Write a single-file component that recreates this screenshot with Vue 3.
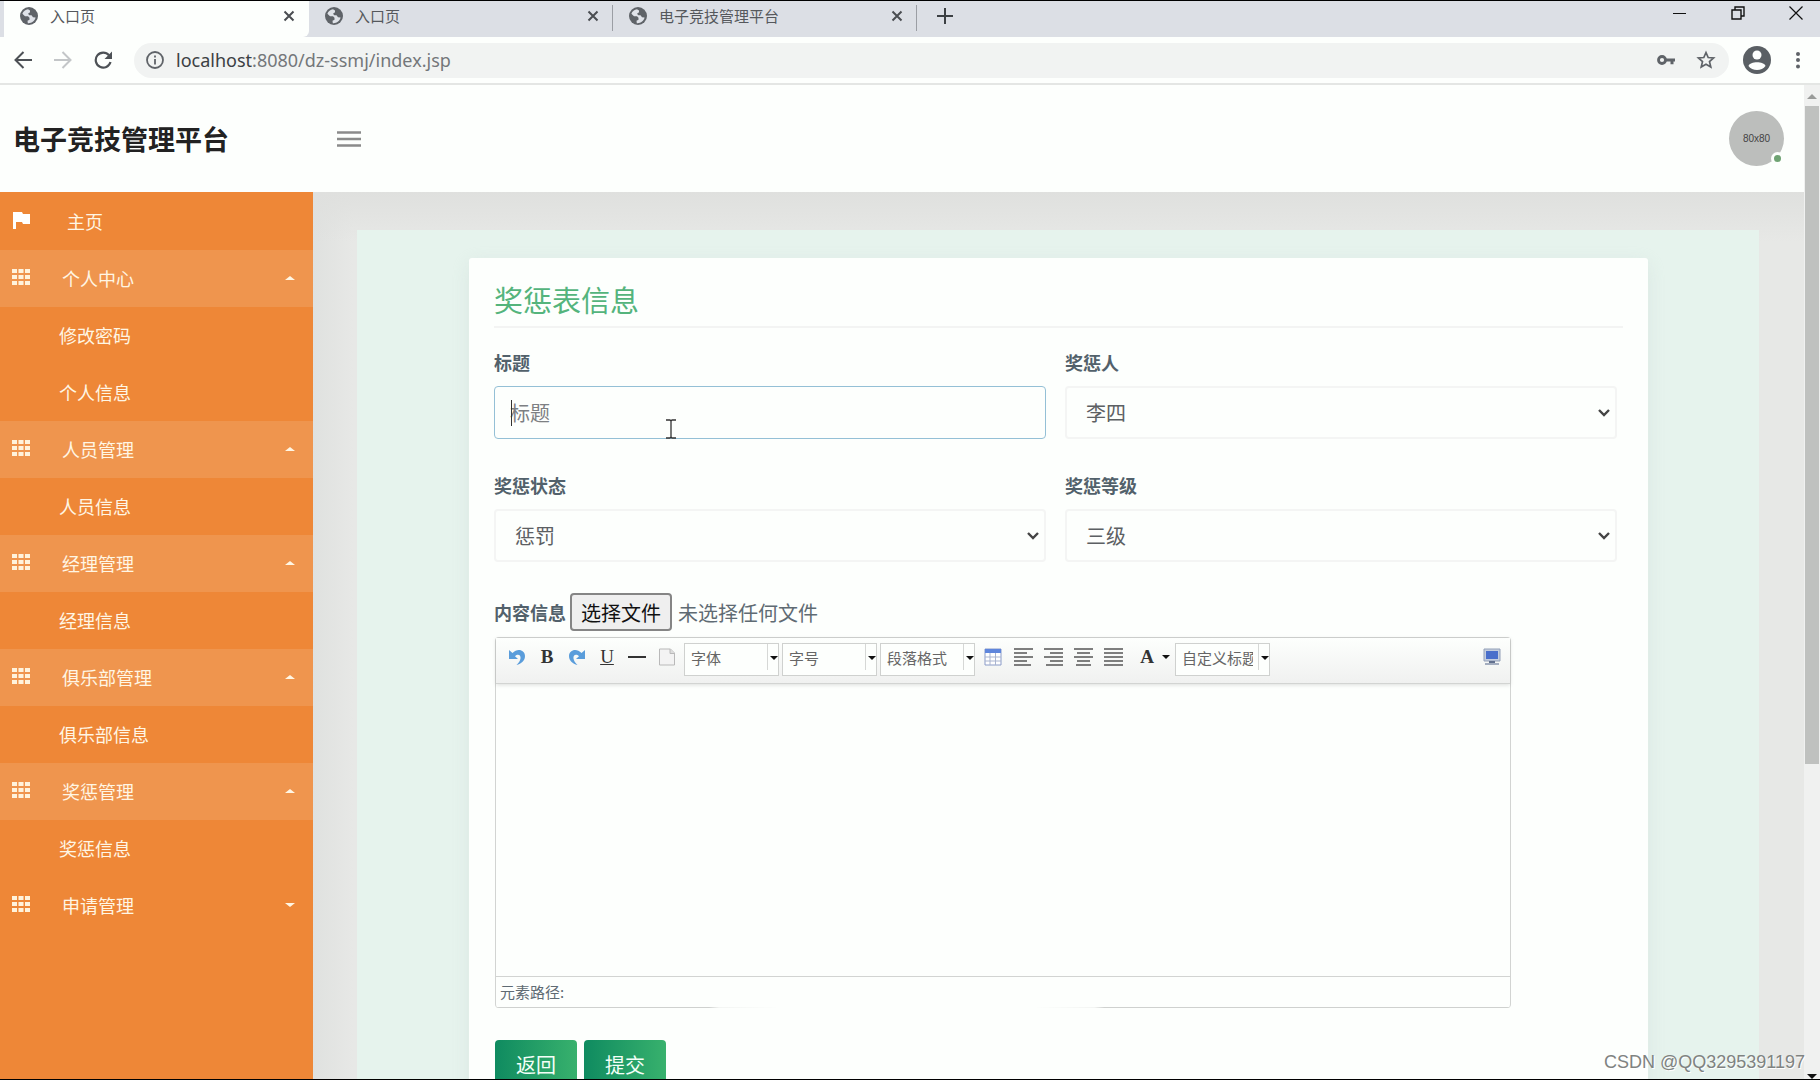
<script setup>
import { ref } from 'vue'

const tabs = [
  { title: '入口页', active: true },
  { title: '入口页', active: false },
  { title: '电子竞技管理平台', active: false },
]

const menu = [
  { title: '个人中心', open: true, items: ['修改密码', '个人信息'] },
  { title: '人员管理', open: true, items: ['人员信息'] },
  { title: '经理管理', open: true, items: ['经理信息'] },
  { title: '俱乐部管理', open: true, items: ['俱乐部信息'] },
  { title: '奖惩管理', open: true, items: ['奖惩信息'] },
  { title: '申请管理', open: false, items: [] },
]

const aligns = [
  { name: '左对齐', d: 'M0 1h19M0 5h13M0 9h19M0 13h13M0 17h17' },
  { name: '右对齐', d: 'M0 1h19M6 5h13M0 9h19M6 13h13M2 17h17' },
  { name: '居中', d: 'M0 1h19M3 5h13M0 9h19M3 13h13M2 17h15' },
  { name: '两端对齐', d: 'M0 1h19M0 5h19M0 9h19M0 13h19M0 17h19' },
]

const title = ref('')
const fileInput = ref(null)
const pickFile = () => fileInput.value.click()
</script>

<template>
  <div class="browser">
    <div class="tabstrip">
      <div v-for="(tab, i) in tabs" :key="i" class="tab" :class="{ active: tab.active }">
        <svg class="globe" viewBox="0 0 18 18" width="18" height="18">
          <circle cx="9" cy="9" r="9" fill="#5f6368" />
          <path d="M8 2.2C5.500 2.500 3.200 4.300 2.400 6.800L5 9.200h3l1.500 1.500v2l-2 1 .3 2.500c3.700.4 7-2 7.800-5.600l-2.600-.4-1.500-2H9.300L8 6.700l2-1.500V3.500z" fill="#dfe2e8" />
        </svg>
        <span class="tab-title">{{ tab.title }}</span>
        <button class="plain" aria-label="关闭标签页">
          <svg viewBox="0 0 12 12" width="12" height="12"><path d="M1.500 1.500l9 9M10.500 1.500l-9 9" stroke="#4a4d51" stroke-width="2" /></svg>
        </button>
      </div>
      <button class="plain new-tab" aria-label="新标签页">
        <svg viewBox="0 0 16 16" width="16" height="16"><path d="M8 0v16M0 8h16" stroke="#3c4043" stroke-width="2" /></svg>
      </button>
      <div class="window-buttons">
        <button class="plain" aria-label="最小化"><svg viewBox="0 0 14 14" width="14" height="14"><path d="M0 7.500h13" stroke="#111" /></svg></button>
        <button class="plain" aria-label="还原"><svg viewBox="0 0 14 14" width="14" height="14" fill="none" stroke="#111" stroke-width="1.400"><path d="M1 4h9v9H1zM4 4V1h9v9h-3" /></svg></button>
        <button class="plain" aria-label="关闭"><svg viewBox="0 0 14 14" width="14" height="14"><path d="M.5.500l13 13M13.500.500l-13 13" stroke="#111" stroke-width="1.200" /></svg></button>
      </div>
    </div>

    <div class="addressbar">
      <button class="plain nav" aria-label="后退"><svg viewBox="0 0 18 18" width="18" height="18" fill="none" stroke="#4d5156" stroke-width="2"><path d="M18 9H2M9.500 1L1.500 9l8 8" /></svg></button>
      <button class="plain nav" aria-label="前进"><svg viewBox="0 0 18 18" width="18" height="18" fill="none" stroke="#c3c6c8" stroke-width="2"><path d="M0 9h16M8.500 1l8 8-8 8" /></svg></button>
      <button class="plain nav" aria-label="刷新"><svg viewBox="0 0 18 18" width="18" height="18"><path d="M15 4.200A7.500 7.500 0 1 0 16.500 11" fill="none" stroke="#4d5156" stroke-width="2.200" /><path d="M18 .5v7.500h-7.500z" fill="#4d5156" /></svg></button>
      <div class="omnibox">
        <svg viewBox="0 0 18 18" width="18" height="18" fill="none" stroke="#5f6368" stroke-width="1.800"><circle cx="9" cy="9" r="8" /><path d="M9 8v5.500M9 4.500v2" /></svg>
        <span class="url"><b>localhost</b>:8080/dz-ssmj/index.jsp</span>
        <button class="plain" aria-label="密码"><svg viewBox="0 0 18 10" width="18" height="10"><circle cx="5" cy="5" r="3.500" fill="none" stroke="#5f6368" stroke-width="2.800" /><path d="M8.500 3.500H18v3h-1.500v2.800h-3V6.500h-5z" fill="#5f6368" /></svg></button>
        <button class="plain" aria-label="收藏"><svg viewBox="0 0 20 20" width="20" height="20"><path d="M10 2.500l2.200 5 5.400.5-4.100 3.600 1.300 5.400L10 14.200 5.200 17l1.300-5.400L2.400 8l5.400-.5z" fill="none" stroke="#5f6368" stroke-width="1.700" /></svg></button>
      </div>
      <button class="plain profile" aria-label="用户"><svg viewBox="0 0 28 28" width="28" height="28"><circle cx="14" cy="14" r="14" fill="#5a5f64" /><circle cx="14" cy="9" r="4.500" fill="#fdfefd" /><path d="M5.500 20c1.500-5 15.500-5 17 0-3.500 5.300-13.500 5.300-17 0z" fill="#fdfefd" /></svg></button>
      <button class="plain" aria-label="菜单"><svg viewBox="0 0 4 18" width="4" height="18" fill="#5f6368"><circle cx="2" cy="3" r="2" /><circle cx="2" cy="9" r="2" /><circle cx="2" cy="15.500" r="2" /></svg></button>
    </div>

    <div class="viewport">
      <div class="page">
        <header class="topbar">
          <h1 class="brand">电子竞技管理平台</h1>
          <button class="plain" aria-label="切换菜单"><svg viewBox="0 0 24 16" width="24" height="16"><path d="M0 1.500h24M0 8h24M0 14.500h24" stroke="#8a8b8a" stroke-width="2.300" /></svg></button>
          <div class="avatar">80x80<i class="online"></i></div>
        </header>

        <div class="body">
          <nav class="sidebar">
            <a href="#" class="row home">
              <svg viewBox="0 0 18 18" width="18" height="18"><path d="M1 1h9l1 2h7v10h-7l-1-2H4v7H1z" fill="#fff" /></svg>
              <span>主页</span>
            </a>
            <template v-for="group in menu" :key="group.title">
              <a href="#" class="row group" :class="{ open: group.open }">
                <svg viewBox="0 0 18 16" width="18" height="16"><path d="M0 0h5v4H0zM6.500 0h5v4h-5zM13 0h5v4h-5zM0 6h5v4H0zM6.500 6h5v4h-5zM13 6h5v4h-5zM0 12h5v4H0zM6.500 12h5v4h-5zM13 12h5v4h-5z" fill="#fff3dc" /></svg>
                <span>{{ group.title }}</span>
                <i class="caret"></i>
              </a>
              <a v-for="item in group.items" :key="item" href="#" class="row sub">{{ item }}</a>
            </template>
          </nav>

          <main class="content">
            <div class="panel">
              <form class="card" @submit.prevent>
                <h2>奖惩表信息</h2>
                <div class="fields">
                  <div class="field">
                    <label for="title">标题</label>
                    <div class="control">
                      <input id="title" v-model="title" class="box focused" type="text" placeholder="标题" />
                      <i class="text-caret"></i>
                      <svg class="pointer" viewBox="0 0 10 20" width="10" height="20"><path d="M0 1h4l1 1 1-1h4M5 2v16M0 19h4l1-1 1 1h4" fill="none" stroke="#333" stroke-width="1.300" /></svg>
                    </div>
                  </div>
                  <div class="field">
                    <label for="person">奖惩人</label>
                    <div class="control">
                      <select id="person" class="box"><option>李四</option></select>
                      <svg class="chevron" viewBox="0 0 12 8" width="12" height="8"><path d="M1 1l5 5 5-5" /></svg>
                    </div>
                  </div>
                  <div class="field">
                    <label for="state">奖惩状态</label>
                    <div class="control">
                      <select id="state" class="box"><option>惩罚</option></select>
                      <svg class="chevron" viewBox="0 0 12 8" width="12" height="8"><path d="M1 1l5 5 5-5" /></svg>
                    </div>
                  </div>
                  <div class="field">
                    <label for="level">奖惩等级</label>
                    <div class="control">
                      <select id="level" class="box"><option>三级</option></select>
                      <svg class="chevron" viewBox="0 0 12 8" width="12" height="8"><path d="M1 1l5 5 5-5" /></svg>
                    </div>
                  </div>
                </div>

                <div class="file-row">
                  <label for="upload">内容信息</label>
                  <input id="upload" ref="fileInput" type="file" hidden />
                  <button type="button" class="file-button" @click="pickFile">选择文件</button>
                  <span>未选择任何文件</span>
                </div>

                <div class="editor">
                  <div class="tools">
                    <button type="button" class="tool" aria-label="撤销"><svg viewBox="0 0 18 18" width="18" height="18"><path d="M1 2v9h9L7 8.200C10 5.500 13 7 12.500 10.500 12.200 13 10.500 15 8.500 17c5-1.200 8.500-4.500 8.500-9C17 2 9.500-.5 4.500 5z" fill="#5a9ddb" /></svg></button>
                    <button type="button" class="tool letter" aria-label="加粗">B</button>
                    <button type="button" class="tool" aria-label="重做"><svg viewBox="0 0 18 18" width="18" height="18"><path d="M17 2v9H8l3-2.800C8 5.500 5 7 5.500 10.500 5.800 13 7.500 15 9.500 17 4.500 15.800 1 12.500 1 8 1 2 8.500-.5 13.500 5z" fill="#5a9ddb" /></svg></button>
                    <button type="button" class="tool letter underline" aria-label="下划线">U</button>
                    <button type="button" class="tool" aria-label="分隔线"><svg viewBox="0 0 18 18" width="18" height="18"><path d="M0 9h18" stroke="#333" stroke-width="2" /></svg></button>
                    <button type="button" class="tool" aria-label="清空"><svg viewBox="0 0 18 18" width="18" height="18"><path d="M1.500 1h11l4 4v12h-15z" fill="#f3f3f3" stroke="#b9b9b9" /><path d="M12 1v4.500h4.500" fill="#ddd" stroke="#b9b9b9" /></svg></button>
                    <span class="combo"><select aria-label="字体"><option>字体</option></select><i></i></span>
                    <span class="combo"><select aria-label="字号"><option>字号</option></select><i></i></span>
                    <span class="combo"><select aria-label="段落格式"><option>段落格式</option></select><i></i></span>
                    <button type="button" class="tool grid" aria-label="表格"><svg viewBox="0 0 18 18" width="18" height="18"><path d="M1 1h16v16H1z" fill="#fff" stroke="#8a9bc8" /><path d="M1 1h16v4H1z" fill="#5f86dc" /><path d="M1 9h16M1 13h16M6 5v12M11.500 5v12" stroke="#a9b4cf" /></svg></button>
                    <button v-for="a in aligns" :key="a.name" type="button" class="tool" :aria-label="a.name"><svg viewBox="0 0 19 18" width="19" height="18"><path :d="a.d" stroke="#555" stroke-width="1.600" /></svg></button>
                    <button type="button" class="tool letter color" aria-label="字体颜色">A<i class="down"></i></button>
                    <span class="combo"><select aria-label="自定义标题"><option>自定义标题</option></select><i></i></span>
                    <button type="button" class="tool screen" aria-label="全屏"><svg viewBox="0 0 18 18" width="18" height="18"><path d="M1 1h16v12H1z" fill="#c5cede" stroke="#93a0b8" /><path d="M3 3h12v8H3z" fill="#4a6fcb" /><path d="M6 13h6v2H6z" fill="#61708e" /><path d="M2 15h14v2H2z" fill="#a3adbf" /></svg></button>
                  </div>
                  <textarea aria-label="内容信息"></textarea>
                  <div class="path">元素路径:</div>
                </div>

                <div class="actions">
                  <button type="button">返回</button>
                  <button type="submit">提交</button>
                </div>
              </form>
            </div>
          </main>
        </div>
      </div>
      <div class="scrollbar">
        <i class="up"></i>
        <div class="track"><div class="thumb"></div></div>
        <i class="down"></i>
      </div>
    </div>
    <div class="watermark">CSDN @QQ3295391197</div>
  </div>
</template>

<style>
body {
  margin: 0;
}
</style>

<style scoped>
* {
  box-sizing: border-box;
}
.browser {
  position: relative;
  height: 100vh;
  display: flex;
  flex-direction: column;
  overflow: hidden;
  border-top: 1px solid #000;
  border-bottom: 1px solid #000;
  background: #fdfffd;
  font-family: "Noto Sans CJK SC", sans-serif;
}
button, input, select, textarea {
  font-family: inherit;
  margin: 0;
}
.plain {
  display: flex;
  padding: 0;
  border: 0;
  background: none;
}

/* browser chrome */
.tabstrip {
  flex: none;
  display: flex;
  height: 36px;
  padding-left: 4px;
  background: #dcdfe5;
}
.tab {
  display: flex;
  align-items: center;
  width: 304px;
  height: 36px;
  padding: 0 14px 6px 16px;
  color: #55585c;
  font-size: 15px;
  background: linear-gradient(#9b9ea4, #9b9ea4) right 4px / 1px 26px no-repeat;
}
.tab.active {
  width: 305px;
  background: #fdfffd;
  border-radius: 0 0 6px 0;
}
.globe {
  flex: none;
  margin-right: 12px;
}
.tab-title {
  flex: 1;
  line-height: 22px;
}
.new-tab {
  align-items: center;
  height: 30px;
  margin-left: 20px;
}
.window-buttons {
  display: flex;
  gap: 44px;
  height: 24px;
  align-items: center;
  margin: 0 17px 0 auto;
}
.addressbar {
  flex: none;
  display: flex;
  align-items: center;
  height: 48px;
  padding: 0 20px 0 14px;
  border-bottom: 2px solid #e4e6e4;
}
.nav {
  margin-right: 22px;
}
.omnibox {
  flex: 1;
  display: flex;
  align-items: center;
  gap: 21px;
  height: 35px;
  margin-right: 14px;
  padding: 0 13px 0 12px;
  border-radius: 18px;
  background: #f1f3f2;
}
.url {
  flex: 1;
  margin-left: -9px;
  font-family: "Noto Sans", sans-serif;
  font-size: 18px;
  line-height: 26px;
  color: #74777a;
}
.url b {
  font-weight: 400;
  color: #3c4043;
}
.profile {
  margin-right: 25px;
}

/* page */
.viewport {
  flex: 1;
  min-height: 0;
  display: flex;
}
.page {
  flex: 1;
  min-width: 0;
  display: flex;
  flex-direction: column;
  overflow: hidden;
}
.topbar {
  flex: none;
  display: flex;
  align-items: center;
  height: 107px;
  padding: 0 20px 0 13px;
}
.brand {
  width: 324px;
  margin: 0;
  font-size: 27px;
  line-height: 40px;
  color: #222;
}
.avatar {
  position: relative;
  width: 55px;
  height: 55px;
  margin-left: auto;
  border-radius: 50%;
  background: #bcbebc;
  color: #444;
  font: 10px/55px "Liberation Sans", sans-serif;
  text-align: center;
}
.online {
  position: absolute;
  right: 0;
  bottom: 1px;
  width: 13px;
  height: 13px;
  border: 3px solid #fdfffd;
  border-radius: 50%;
  background: #6fa373;
}
.body {
  flex: 1;
  min-height: 0;
  display: flex;
}
.sidebar {
  flex: none;
  width: 313px;
  background: #ee8737;
}
.row {
  display: flex;
  align-items: center;
  height: 57px;
  padding: 0 18px 1px 12px;
  color: #fff6e4;
  font-size: 18px;
  text-decoration: none;
}
.row svg {
  margin: 0 32px 2px 0;
}
.home {
  height: 58px;
}
.home svg {
  margin-right: 37px;
}
.open {
  background: #ef954e;
}
.sub {
  padding-left: 59px;
  padding-bottom: 2px;
}
.caret {
  margin-left: auto;
  border: 5px solid transparent;
  border-top: 4px solid #fff6e4;
  border-bottom: 0;
}
.open .caret {
  border-top: 0;
  border-bottom: 4px solid #fff6e4;
}
.content {
  flex: 1;
  min-width: 0;
  height: max-content;
  padding: 38px 45px 0 44px;
  background: linear-gradient(#dfe0de, #e7e8e600 50px), linear-gradient(90deg, #dfe1df, #e7e8e6 40px);
}
.panel {
  padding: 28px 111px 60px 112px;
  background: #e6f3ed;
}
.card {
  padding: 23px 25px 40px;
  border-radius: 3px;
  background: #fdfffd;
  box-shadow: 0 5px 18px #c3d3d055;
}
h2 {
  margin: 0 0 22px;
  padding-bottom: 9px;
  border-bottom: 2px solid #f3f4f3;
  font-size: 29px;
  font-weight: 400;
  line-height: 36px;
  color: #54b47c;
}
.fields {
  display: grid;
  grid-template-columns: 1fr 1fr;
  gap: 34px 19px;
  padding-right: 6px;
}
label {
  display: block;
  font-size: 18px;
  font-weight: 700;
  line-height: 24px;
  color: #52616b;
}
.control {
  position: relative;
  margin-top: 12px;
}
.box {
  display: block;
  width: 100%;
  height: 53px;
  padding: 0 19px;
  border: 2px solid #f4f5f4;
  border-radius: 4px;
  outline: 0;
  background: #fdfffd;
  color: #5c6063;
  font-size: 20px;
  appearance: none;
}
.focused {
  padding: 0 15px;
  border: 1px solid #94c0d6;
}
.box::placeholder {
  color: #7d8083;
}
.text-caret {
  position: absolute;
  left: 17px;
  top: 14px;
  width: 1px;
  height: 26px;
  background: #333;
}
.pointer {
  position: absolute;
  left: 172px;
  top: 33px;
}
.chevron {
  position: absolute;
  right: 7px;
  top: 23px;
  fill: none;
  stroke: #444;
  stroke-width: 2.4;
  pointer-events: none;
}
.file-row {
  display: flex;
  align-items: center;
  margin: 31px 0 6px;
  font-size: 20px;
  color: #5f6b73;
}
.file-button {
  height: 38px;
  margin: 0 6px 0 4px;
  padding: 0 9px;
  border: 2px solid #858585;
  border-radius: 4px;
  background: #efefef;
  color: #111;
  font-size: 20px;
}
.editor {
  width: 90%;
  margin-left: 1px;
  border: 1px solid #d2d4d2;
  border-radius: 4px;
  border-bottom: 0;
  background: linear-gradient(90deg, #cfd1cf 21%, #f3f5f3 22%, #fdfffd 28%, #fdfffd 53%, #f3f5f3 59%, #cfd1cf 60%) bottom / 100% 1px no-repeat;
}
.tools {
  display: flex;
  align-items: center;
  height: 46px;
  padding: 0 9px 0 6px;
  border-bottom: 1px solid #d2d4d2;
  background: linear-gradient(#fdfffd, #f0f1f0);
  box-shadow: 0 1px 4px #0002;
}
.tool {
  display: flex;
  flex: none;
  align-items: center;
  justify-content: center;
  width: 30px;
  height: 30px;
  margin-bottom: 7px;
  padding: 0;
  border: 0;
  background: none;
}
.grid {
  margin-left: 2px;
}
.letter {
  color: #333;
  font-family: "Liberation Serif", serif;
  font-size: 19px;
  font-weight: 700;
}
.underline {
  font-weight: 400;
  text-decoration: underline;
}
.color {
  gap: 8px;
  justify-content: flex-end;
  width: 45px;
  padding-right: 3px;
}
.down {
  border: 4px solid transparent;
  border-top-color: #111;
  border-bottom: 0;
}
.combo {
  position: relative;
  flex: none;
  width: 95px;
  height: 33px;
  margin: 0 1px 2px 2px;
}
.combo select {
  width: 100%;
  height: 100%;
  padding: 0 16px 5px 6px;
  border: 1px solid #cfd1cf;
  border-radius: 0;
  background: linear-gradient(#d6d8d6, #d6d8d6) right 10px top / 1px 26px no-repeat #fdfffd;
  color: #666;
  font-size: 15px;
  appearance: none;
}
.combo i {
  position: absolute;
  right: 1px;
  top: 13px;
  border: 4px solid transparent;
  border-top-color: #111;
  border-bottom: 0;
  pointer-events: none;
}
.screen {
  margin-left: auto;
  width: 18px;
}
textarea {
  display: block;
  width: 100%;
  height: 292px;
  border: 0;
  outline: 0;
  resize: none;
  background: transparent;
  font-size: 16px;
}
.path {
  height: 32px;
  padding-left: 4px;
  border-top: 1px solid #d2d4d2;
  font-size: 15px;
  line-height: 30px;
  color: #5f6b73;
}
.actions {
  display: flex;
  gap: 7px;
  margin: 32px 0 0 1px;
}
.actions button {
  width: 82px;
  height: 48px;
  padding: 0;
  border: 0;
  border-radius: 4px;
  background: linear-gradient(90deg, #0f8b60, #38b16d);
  color: #f4fff8;
  font-size: 20px;
}

.scrollbar {
  flex: none;
  display: flex;
  flex-direction: column;
  align-items: center;
  width: 16px;
  padding-top: 9px;
  background: #f0f1f0;
}
.scrollbar .up {
  border: 5px solid transparent;
  border-top: 0;
  border-bottom-color: #999b99;
}
.scrollbar .down {
  border-width: 5px 5px 0;
}
.track {
  flex: 1;
  width: 14px;
  margin-top: 7px;
}
.thumb {
  height: 68%;
  background: #bfc1bf;
}
.watermark {
  position: absolute;
  right: 15px;
  bottom: 6px;
  color: #7f8381;
  font: 18px/22px "Liberation Sans", sans-serif;
  text-shadow: 1px 1px 0 #fff;
}
</style>
